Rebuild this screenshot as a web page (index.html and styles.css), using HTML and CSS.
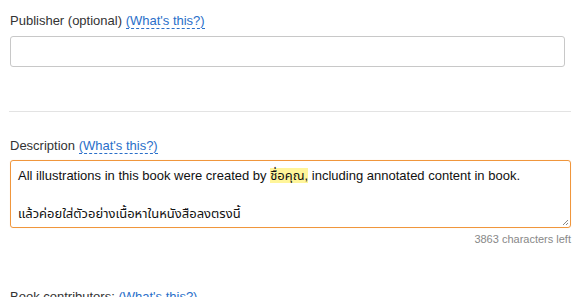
FILE: index.html
```html
<!DOCTYPE html>
<html>
<head>
<meta charset="utf-8">
<link rel="stylesheet" href="styles.css">
</head>
<body>
<div class="form">
  <div class="field publisher">
    <div class="label">Publisher (optional) <a class="help">(What's this?)</a></div>
    <div class="input"></div>
  </div>
  <hr class="rule">
  <div class="field description">
    <div class="label">Description <a class="help">(What's this?)</a></div>
    <div class="textarea">
      <div class="line">All illustrations in this book were created by <span class="hl">ชื่อคุณ,</span> including annotated content in book.</div>
      <div class="line">&nbsp;</div>
      <div class="line">แล้วค่อยใส่ตัวอย่างเนื้อหาในหนังสือลงตรงนี้</div>
      <svg class="grip" width="7" height="7" viewBox="0 0 7 7"><path d="M6 1L1 6M6 4L4 6" stroke="#888" stroke-width="1"/></svg>
    </div>
    <div class="counter">3863 characters left</div>
  </div>
  <div class="field contributors">
    <div class="label">Book contributors: <a class="help">(What's this?)</a></div>
  </div>
</div>
</body>
</html>
```
FILE: styles.css
```css
html, body {
  margin: 0;
  padding: 0;
  background: #fff;
}
body {
  font-family: "Liberation Sans", Arial, "Noto Sans Thai", "DejaVu Sans", sans-serif;
  font-size: 13px;
  color: #333;
}
.form {
  padding: 0 7px 0 10px;
}
.label {
  line-height: 18px;
}
.help {
  color: #2a6fc9;
  border-bottom: 1px dashed #2a6fc9;
  text-decoration: none;
}
.publisher {
  padding-top: 12px;
}
.publisher .label {
  margin-bottom: 6px;
}
.input {
  width: 553px;
  height: 29px;
  border: 1px solid #c8c8c8;
  border-radius: 3px;
  box-sizing: content-box;
}
.rule {
  border: 0;
  border-top: 1px solid #e3e3e3;
  margin: 44px 0 0 -1px;
  height: 0;
}
.description {
  padding-top: 25px;
}
.description .label {
  margin-bottom: 5px;
}
.textarea {
  position: relative;
  height: 66px;
  border: 1px solid #f0963c;
  border-radius: 3px;
  padding: 0 7px;
  color: #111;
  box-shadow: 0 0 1px rgba(240,150,60,0.3);
}
.line {
  line-height: 19px;
}
.textarea .line:first-child {
  margin-top: 5px;
}
.hl {
  background: #fff59a;
}
.grip {
  position: absolute;
  right: 1px;
  bottom: 1px;
}
.counter {
  text-align: right;
  font-size: 11px;
  color: #888;
  margin-top: 4px;
  line-height: 14px;
}
.contributors {
  padding-top: 42px;
}
```
